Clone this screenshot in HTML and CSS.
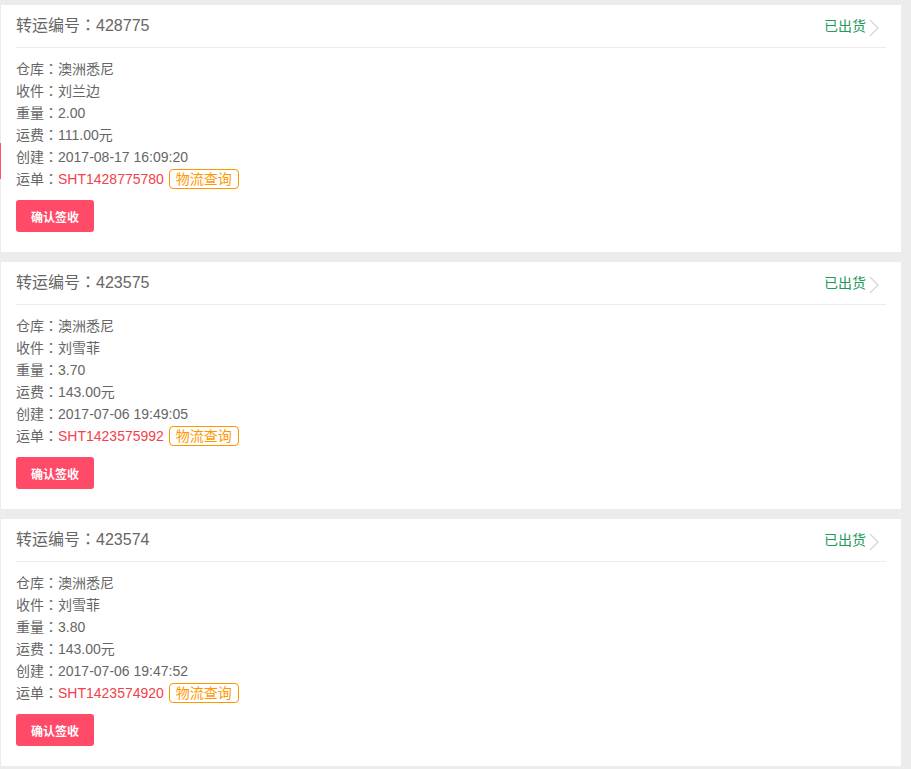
FILE: index.html
```html
<!DOCTYPE html>
<html lang="zh">
<head>
<meta charset="utf-8">
<title>转运列表</title>
<link rel="stylesheet" href="styles.css">
</head>
<body>
<div class="edge-mark"></div>
<div class="list">
  <div class="card">
    <div class="card-head">
      <span class="title">转运编号<span class="c" lang="zh-TW">：</span>428775</span>
      <span class="status">已出货<svg class="chev" width="10" height="18" viewBox="0 0 10 18"><path d="M1 1 L9 9 L1 17" fill="none" stroke="#d6d6d6" stroke-width="1.3"/></svg></span>
    </div>
    <div class="card-body">
      <div class="row">仓库<span class="c" lang="zh-TW">：</span>澳洲悉尼</div>
      <div class="row">收件<span class="c" lang="zh-TW">：</span>刘兰边</div>
      <div class="row">重量<span class="c" lang="zh-TW">：</span>2.00</div>
      <div class="row">运费<span class="c" lang="zh-TW">：</span>111.00元</div>
      <div class="row">创建<span class="c" lang="zh-TW">：</span>2017-08-17 16:09:20</div>
      <div class="row">运单<span class="c" lang="zh-TW">：</span><span class="no">SHT1428775780</span> <span class="tag">物流查询</span></div>
      <button class="btn">确认签收</button>
    </div>
  </div>
  <div class="card">
    <div class="card-head">
      <span class="title">转运编号<span class="c" lang="zh-TW">：</span>423575</span>
      <span class="status">已出货<svg class="chev" width="10" height="18" viewBox="0 0 10 18"><path d="M1 1 L9 9 L1 17" fill="none" stroke="#d6d6d6" stroke-width="1.3"/></svg></span>
    </div>
    <div class="card-body">
      <div class="row">仓库<span class="c" lang="zh-TW">：</span>澳洲悉尼</div>
      <div class="row">收件<span class="c" lang="zh-TW">：</span>刘雪菲</div>
      <div class="row">重量<span class="c" lang="zh-TW">：</span>3.70</div>
      <div class="row">运费<span class="c" lang="zh-TW">：</span>143.00元</div>
      <div class="row">创建<span class="c" lang="zh-TW">：</span>2017-07-06 19:49:05</div>
      <div class="row">运单<span class="c" lang="zh-TW">：</span><span class="no">SHT1423575992</span> <span class="tag">物流查询</span></div>
      <button class="btn">确认签收</button>
    </div>
  </div>
  <div class="card">
    <div class="card-head">
      <span class="title">转运编号<span class="c" lang="zh-TW">：</span>423574</span>
      <span class="status">已出货<svg class="chev" width="10" height="18" viewBox="0 0 10 18"><path d="M1 1 L9 9 L1 17" fill="none" stroke="#d6d6d6" stroke-width="1.3"/></svg></span>
    </div>
    <div class="card-body">
      <div class="row">仓库<span class="c" lang="zh-TW">：</span>澳洲悉尼</div>
      <div class="row">收件<span class="c" lang="zh-TW">：</span>刘雪菲</div>
      <div class="row">重量<span class="c" lang="zh-TW">：</span>3.80</div>
      <div class="row">运费<span class="c" lang="zh-TW">：</span>143.00元</div>
      <div class="row">创建<span class="c" lang="zh-TW">：</span>2017-07-06 19:47:52</div>
      <div class="row">运单<span class="c" lang="zh-TW">：</span><span class="no">SHT1423574920</span> <span class="tag">物流查询</span></div>
      <button class="btn">确认签收</button>
    </div>
  </div>
</div>
</body>
</html>
```

FILE: styles.css
```css
html, body {
  margin: 0;
  padding: 0;
  background: #ececec;
}
body {
  font-family: "Liberation Sans", Arial, "Noto Sans CJK SC", sans-serif;
  color: #666;
  position: relative;
}
.c {
  font-family: "Noto Sans CJK SC", sans-serif;
  line-height: 0;
}
.edge-mark {
  position: absolute;
  left: 0;
  top: 143px;
  width: 1px;
  height: 36px;
  background: #ff5577;
}
.list {
  width: 900px;
  margin-left: 1px;
  padding-top: 5px;
  display: flex;
  flex-direction: column;
  gap: 10px;
}
.card {
  background: #fff;
  padding: 0 15px 20px 15px;
}
.card-head {
  height: 42px;
  display: flex;
  align-items: center;
  justify-content: space-between;
  border-bottom: 1px solid #ececec;
}
.title {
  font-size: 16px;
  color: #666;
  margin-top: -4px;
}
.status {
  font-size: 14px;
  color: #229a5a;
  display: flex;
  align-items: center;
  margin-top: -2px;
}
.chev {
  margin-left: 3px;
  margin-right: 7px;
  margin-top: 6px;
}
.card-body {
  padding-top: 10px;
}
.row {
  font-size: 14px;
  line-height: 22px;
  height: 22px;
  color: #666;
}
.no {
  color: #f2414c;
  margin-right: 1px;
}
.tag {
  display: inline-block;
  color: #ff9800;
  border: 1px solid #ff9800;
  border-radius: 4px;
  padding: 0 6px;
  line-height: 18px;
}
.btn {
  display: block;
  margin-top: 10px;
  width: 78px;
  height: 32px;
  border: none;
  border-radius: 3px;
  background: #ff4a68;
  color: #fff;
  font-family: "Liberation Sans", Arial, "Noto Sans CJK SC", sans-serif;
  font-size: 12px;
  font-weight: bold;
  padding: 0;
}
```
